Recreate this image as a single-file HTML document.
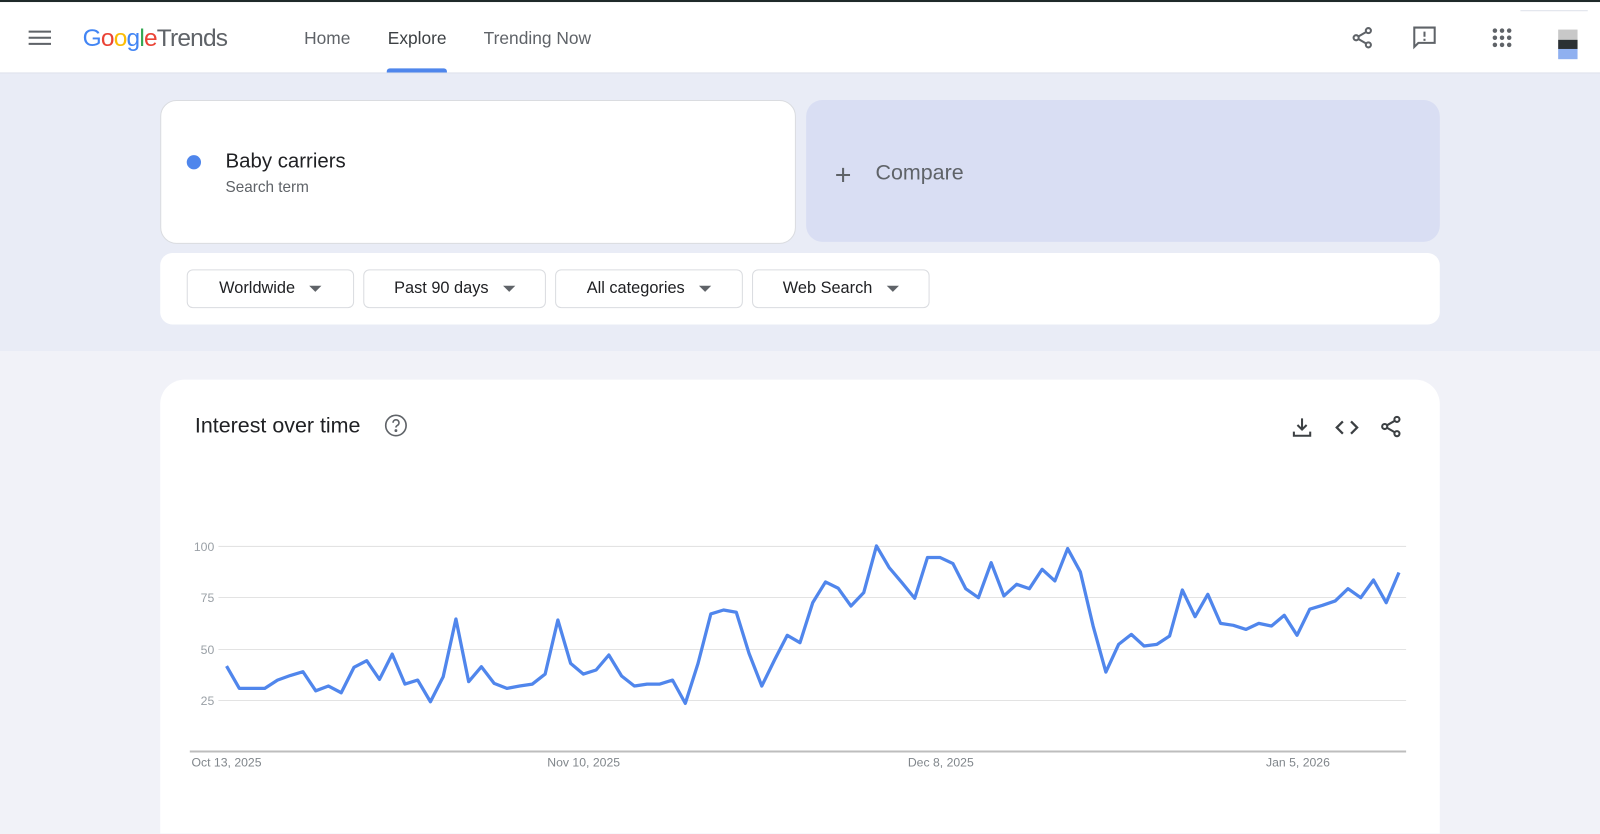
<!DOCTYPE html>
<html style="height:834px;overflow:hidden"><head><meta charset="utf-8"><style>
*{box-sizing:border-box;margin:0;padding:0}
html,body{width:1600px;height:834px;overflow:hidden}
body{background:#f1f2f8;font-family:"Liberation Sans",Arial,sans-serif;position:relative;color:#202124}
#w{position:absolute;left:0;top:0;width:1568px;height:817px;overflow:hidden;transform:scale(1.020408);transform-origin:0 0}
.abs{position:absolute}
.hdr{left:0;top:0;width:1568px;height:72px;background:#fff;border-top:2px solid #1f2a2a;border-bottom:1px solid #dde1ea}
.band{left:0;top:72px;width:1568px;height:272px;background:#e9ecf6}
.nav{font-size:17px;color:#5f6368;top:28px}
.card{background:#fff;border-radius:16px}
.dd{top:264px;height:38px;border:1px solid #dadce0;border-radius:6px;background:#fff;font-size:16px;color:#202124;display:flex;align-items:center;justify-content:center;gap:14px}
.tri{width:0;height:0;border-left:6px solid transparent;border-right:6px solid transparent;border-top:6px solid #5f6368}
</style></head><body><div id="w">
<div class="abs hdr"></div>
<svg class="abs" style="left:28px;top:29px" width="22" height="16"><rect y="1" width="22" height="2" fill="#5f6368"/><rect y="7" width="22" height="2" fill="#5f6368"/><rect y="13" width="22" height="2" fill="#5f6368"/></svg>
<div class="abs" style="left:81px;top:24px;font-size:24px;letter-spacing:-0.8px"><span style="color:#4285f4">G</span><span style="color:#ea4335">o</span><span style="color:#fbbc05">o</span><span style="color:#4285f4">g</span><span style="color:#34a853">l</span><span style="color:#ea4335">e</span><span style="color:#5f6368">Trends</span></div>
<div class="abs nav" style="left:298px">Home</div>
<div class="abs nav" style="left:380px;color:#3c4043">Explore</div>
<div class="abs" style="left:379px;top:67px;width:59px;height:4px;background:#4f86ec;border-radius:3px 3px 0 0"></div>
<div class="abs nav" style="left:474px">Trending Now</div>
<svg class="abs" style="left:1323px;top:25px" width="24" height="24" viewBox="0 0 24 24" fill="none" stroke="#5f6368" stroke-width="2"><circle cx="18" cy="5" r="2.5"/><circle cx="6" cy="12" r="2.5"/><circle cx="18" cy="19" r="2.5"/><path d="M8.2 10.8l7.6-4.4M8.2 13.2l7.6 4.4"/></svg>
<svg class="abs" style="left:1384px;top:25px" width="24" height="24" viewBox="0 0 24 24" fill="none" stroke="#5f6368" stroke-width="2"><path d="M2 2h20v15H6l-4 4z"/><path d="M12 6v5M12 13v2"/></svg>
<svg class="abs" style="left:1462px;top:27px" width="20" height="20" fill="#5f6368"><circle cx="3" cy="3" r="2.2"/><circle cx="10" cy="3" r="2.2"/><circle cx="17" cy="3" r="2.2"/><circle cx="3" cy="10" r="2.2"/><circle cx="10" cy="10" r="2.2"/><circle cx="17" cy="10" r="2.2"/><circle cx="3" cy="17" r="2.2"/><circle cx="10" cy="17" r="2.2"/><circle cx="17" cy="17" r="2.2"/></svg>
<div class="abs" style="left:1490px;top:10px;width:66px;height:1px;background:#dde1ea"></div>
<div class="abs" style="left:1527px;top:29px;width:19px;height:10px;background:#c8c8c8"></div>
<div class="abs" style="left:1527px;top:39px;width:19px;height:9px;background:#2b3134"></div>
<div class="abs" style="left:1527px;top:48px;width:19px;height:10px;background:#8fb0f0"></div>
<div class="abs band"></div>
<div class="abs card" style="left:157px;top:98px;width:623px;height:141px;border:1px solid #dadce0"></div>
<div class="abs" style="left:183px;top:152px;width:14px;height:14px;border-radius:50%;background:#4f86ec"></div>
<div class="abs" style="left:221px;top:147px;font-size:20px">Baby carriers</div>
<div class="abs" style="left:221px;top:175px;font-size:15px;color:#5f6368">Search term</div>
<div class="abs" style="left:790px;top:98px;width:621px;height:139px;border-radius:16px;background:#d9def3"></div>
<div class="abs" style="left:818px;top:156px;font-size:28px;color:#5f6368;font-weight:300">+</div>
<div class="abs" style="left:858px;top:158px;font-size:21px;color:#5f6368">Compare</div>
<div class="abs card" style="left:157px;top:248px;width:1254px;height:70px;border-radius:12px"></div>
<div class="abs dd" style="left:183px;width:164px">Worldwide<span class="tri"></span></div>
<div class="abs dd" style="left:356px;width:179px">Past 90 days<span class="tri"></span></div>
<div class="abs dd" style="left:544px;width:184px">All categories<span class="tri"></span></div>
<div class="abs dd" style="left:737px;width:174px">Web Search<span class="tri"></span></div>
<div class="abs card" style="left:157px;top:372px;width:1254px;height:445px;border-radius:24px 24px 0 0"></div>
<div class="abs" style="left:191px;top:406px;font-size:21px">Interest over time</div>
<svg class="abs" style="left:376px;top:405px" width="24" height="24" viewBox="0 0 24 24" fill="none" stroke="#5f6368" stroke-width="1.6"><circle cx="12" cy="12" r="10"/><path d="M9.2 9.3a2.9 2.9 0 1 1 4.2 2.6c-.9.5-1.4 1.1-1.4 2.1"/><circle cx="12" cy="17" r=".6" fill="#5f6368"/></svg>
<svg class="abs" style="left:1265px;top:408px" width="22" height="22" viewBox="0 0 22 22" fill="none" stroke="#3c4043" stroke-width="2"><path d="M11 2v11M6.5 8.5L11 13l4.5-4.5M3 15v4h16v-4"/></svg>
<svg class="abs" style="left:1308px;top:408px" width="24" height="22" viewBox="0 0 24 22" fill="none" stroke="#3c4043" stroke-width="2.2"><path d="M8 5l-6 6 6 6M16 5l6 6-6 6"/></svg>
<svg class="abs" style="left:1351px;top:406px" width="24" height="24" viewBox="0 0 24 24" fill="none" stroke="#3c4043" stroke-width="2"><circle cx="18" cy="5" r="2.5"/><circle cx="6" cy="12" r="2.5"/><circle cx="18" cy="19" r="2.5"/><path d="M8.2 10.8l7.6-4.4M8.2 13.2l7.6 4.4"/></svg>
<svg class="abs" style="left:0;top:0" width="1568" height="817">
<g stroke="#e3e3e3" stroke-width="1"><line x1="214" x2="1378" y1="535.5" y2="535.5"/><line x1="214" x2="1378" y1="585.5" y2="585.5"/><line x1="214" x2="1378" y1="636.5" y2="636.5"/><line x1="214" x2="1378" y1="686.5" y2="686.5"/></g>
<line x1="186" x2="1378" y1="736.5" y2="736.5" stroke="#bdbdbd" stroke-width="2"/>
<g font-family="Liberation Sans,Arial,sans-serif" font-size="12" fill="#9aa0a6" text-anchor="end"><text x="210" y="540">100</text><text x="210" y="590">75</text><text x="210" y="641">50</text><text x="210" y="691">25</text></g>
<g font-family="Liberation Sans,Arial,sans-serif" font-size="12" fill="#80868b" text-anchor="middle"><text x="222" y="751">Oct 13, 2025</text><text x="572" y="751">Nov 10, 2025</text><text x="922" y="751">Dec 8, 2025</text><text x="1272" y="751">Jan 5, 2026</text></g>
<polyline transform="translate(222,0) scale(12.489,1)" vector-effect="non-scaling-stroke" fill="none" stroke="#5086ec" stroke-width="3.2" stroke-linejoin="round" points="0,652.7 1,674.6 2,674.6 3,674.6 4,666.5 5,662 6,658.3 7,677 8,672.3 9,678.9 10,654 11,647.5 12,665.8 13,641 14,670.4 15,666.5 16,687.7 17,663.2 18,606.6 19,668 20,653.4 21,669.7 22,674.6 23,672.3 24,670.4 25,660.6 26,607.6 27,650.1 28,660.6 29,656.6 30,641.9 31,662.5 32,672.3 33,670.4 34,670.4 35,666.5 36,689.3 37,650.1 38,601.7 39,597.8 40,600 41,640.3 42,672.3 43,646.8 44,622.6 45,629.8 46,590.6 47,570.3 48,576.5 49,593.9 50,580.8 51,535 52,556.3 53,571 54,586.3 55,546.4 56,546.4 57,552.3 58,576.9 59,585.7 60,551.4 61,584 62,572.6 63,576.9 64,557.9 65,569.3 66,537.6 67,560.5 68,613.5 69,658.6 70,631.5 71,621.7 72,633.1 73,631.5 74,623.3 75,578.2 76,604.3 77,582.4 78,610.9 79,612.8 80,616.8 81,610.9 82,613.5 83,603 84,622.6 85,597 86,593.2 87,588.9 88,576.9 89,585.7 90,568.4 91,590.6 92,561"/>
</svg>
</div></body></html>
